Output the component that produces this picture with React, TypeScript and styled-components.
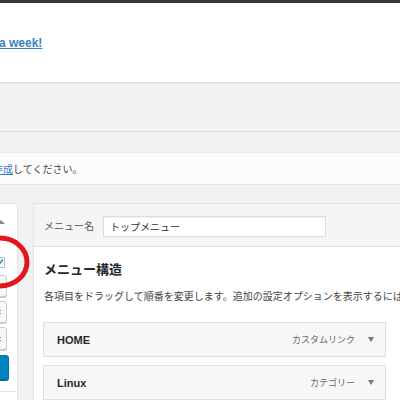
import React from "react";
import styled, { createGlobalStyle } from "styled-components";

const Global = createGlobalStyle`
  html, body { margin: 0; padding: 0; }
  body {
    width: 400px;
    height: 400px;
    overflow: hidden;
    background: #f1f1f1;
    font-family: "Liberation Sans", "Noto Sans CJK JP", sans-serif;
    color: #444;
  }
`;

const Page = styled.div`
  position: relative;
  width: 400px;
  height: 400px;
  overflow: hidden;
  display: flex;
  flex-direction: column;
  background: #f1f1f1;
`;

const TopBar = styled.div`
  flex: none;
  height: 3px;
  background: #32373c;
`;

const Header = styled.header`
  flex: none;
  box-sizing: border-box;
  height: 80px;
  padding-top: 32px;
  background: #fff;
  border-bottom: 1px solid #dedede;
  box-shadow: 0 1px 1px rgba(0, 0, 0, 0.04);
`;

const WeekLink = styled.a`
  display: block;
  margin-left: -1px;
  font-size: 12px;
  line-height: 16px;
  font-weight: bold;
  color: #3a80c3;
  text-decoration: underline;
`;

const Rule = styled.div`
  flex: none;
  height: 1px;
  margin-top: 48px;
  background: #dcdcdc;
`;

const Notice = styled.div`
  flex: none;
  box-sizing: border-box;
  height: 32px;
  margin-top: 20px;
  display: flex;
  align-items: center;
  background: #fcfcfc;
  border-top: 1px solid #ececec;
  box-shadow: 0 1px 1px rgba(0, 0, 0, 0.05);
  font-size: 10px;
  color: #444;
  white-space: nowrap;
`;

const NoticeText = styled.span`
  margin-left: -7px;
`;

const NoticeLink = styled.a`
  color: #3a80c3;
  text-decoration: underline;
`;

const Columns = styled.div`
  flex: 1;
  display: flex;
  gap: 15px;
  margin-top: 19px;
  align-items: stretch;
`;

const LeftCol = styled.aside`
  flex: none;
  box-sizing: border-box;
  width: 18px;
  display: flex;
  flex-direction: column;
  background: #fff;
  border-top: 1px solid #e5e5e5;
  border-right: 1px solid #e5e5e5;
`;

const ToggleArrow = styled.span`
  width: 0;
  height: 0;
  margin: 16px 0 0 -3px;
  border-left: 4px solid transparent;
  border-right: 4px solid transparent;
  border-bottom: 4px solid #8a8a8a;
`;

const CheckBox = styled.span`
  box-sizing: border-box;
  width: 11px;
  height: 11px;
  margin: 33px 0 0 -6px;
  display: flex;
  align-items: center;
  justify-content: center;
  background: #fff;
  border: 1px solid #b4b9be;
  border-radius: 1px;
`;

const SideButton = styled.span<{ $h: number; $primary?: boolean; $gap: number }>`
  box-sizing: border-box;
  width: ${(p) => (p.$primary ? 30 : 28)}px;
  height: ${(p) => p.$h}px;
  margin: ${(p) => p.$gap}px 0 0 -21px;
  display: flex;
  align-items: center;
  justify-content: flex-end;
  padding-right: 5px;
  border-radius: 3px;
  background: ${(p) => (p.$primary ? "#0085ba" : "#f7f7f7")};
  border: 1px solid ${(p) => (p.$primary ? "#0073aa" : "#cccccc")};
  box-shadow: ${(p) => (p.$primary ? "0 1px 0 #006799" : "0 1px 0 #ccc")};
`;

const SideDivider = styled.div`
  height: 1px;
  margin-top: 11px;
  background: #e5e5e5;
`;

const Panel = styled.section`
  flex: none;
  box-sizing: border-box;
  width: 420px;
  display: flex;
  flex-direction: column;
  background: #fff;
  border: 1px solid #e5e5e5;
  box-shadow: 0 1px 1px rgba(0, 0, 0, 0.04);
`;

const PanelHeader = styled.div`
  box-sizing: border-box;
  height: 43px;
  display: flex;
  align-items: center;
  padding-left: 10px;
  background: #f5f5f5;
  border-bottom: 1px solid #dfdfdf;
`;

const NameLabel = styled.label`
  font-size: 10px;
  color: #555;
  margin-right: 9px;
`;

const NameInput = styled.input`
  box-sizing: border-box;
  width: 223px;
  height: 21px;
  padding: 0 6px;
  margin: 2px 0 0;
  border: 1px solid #ddd;
  background: #fff;
  box-shadow: inset 0 1px 2px rgba(0, 0, 0, 0.07);
  font-family: "Liberation Sans", "Noto Sans CJK JP", sans-serif;
  font-size: 10px;
  color: #333;
  outline: none;
`;

const PanelBody = styled.div`
  padding: 14px 10px 0;
  display: flex;
  flex-direction: column;
`;

const Heading = styled.h3`
  margin: 0;
  font-size: 13px;
  line-height: 18px;
  font-weight: bold;
  color: #23282d;
`;

const Desc = styled.p`
  margin: 11px 0 0;
  font-size: 10px;
  line-height: 14px;
  white-space: nowrap;
  color: #444;
`;

const ItemList = styled.ul`
  list-style: none;
  margin: 18px 0 0 -1px;
  padding: 0;
  display: flex;
  flex-direction: column;
  gap: 8px;
`;

const Item = styled.li`
  box-sizing: border-box;
  width: 343px;
  height: 35px;
  display: flex;
  align-items: center;
  padding: 0 11px 0 13px;
  background: #f7f7f7;
  border: 1px solid #dfdfdf;
`;

const ItemTitle = styled.span`
  font-size: 11px;
  font-weight: bold;
  color: #23282d;
`;

const ItemType = styled.span`
  margin-left: auto;
  font-size: 9px;
  color: #666;
`;

const ItemArrow = styled.span`
  width: 0;
  height: 0;
  margin-left: 13px;
  border-left: 3.5px solid transparent;
  border-right: 3.5px solid transparent;
  border-top: 5px solid #777;
`;

const Annotation = styled.svg`
  position: absolute;
  left: -40px;
  top: 225px;
  width: 80px;
  height: 80px;
  pointer-events: none;
`;

const SortGlyph = () => (
  <svg width="4" height="8" viewBox="0 0 4 8">
    <path d="M0 3 L2 0.5 L4 3 Z" fill="#444" />
    <path d="M0 5 L2 7.5 L4 5 Z" fill="#444" />
  </svg>
);

export default function App() {
  return (
    <>
      <Global />
      <Page>
        <TopBar />
        <Header>
          <WeekLink href="#">a week!</WeekLink>
        </Header>
        <Rule />
        <Notice>
          <NoticeText>
            <NoticeLink href="#">作成</NoticeLink>してください。
          </NoticeText>
        </Notice>
        <Columns>
          <LeftCol>
            <ToggleArrow />
            <CheckBox>
              <svg width="9" height="9" viewBox="0 0 9 9">
                <path d="M1.5 4.8 L3.6 7 L7.8 1.6" fill="none" stroke="#1e8cbe" strokeWidth="1.6" />
              </svg>
            </CheckBox>
            <SideButton $h={22} $gap={7}>
              <SortGlyph />
            </SideButton>
            <SideButton $h={22} $gap={4}>
              <SortGlyph />
            </SideButton>
            <SideButton $h={23} $gap={4}>
              <SortGlyph />
            </SideButton>
            <SideButton $h={25} $gap={5} $primary />
            <SideDivider />
          </LeftCol>
          <Panel>
            <PanelHeader>
              <NameLabel>メニュー名</NameLabel>
              <NameInput readOnly defaultValue="トップメニュー" />
            </PanelHeader>
            <PanelBody>
              <Heading>メニュー構造</Heading>
              <Desc>各項目をドラッグして順番を変更します。追加の設定オプションを表示するには</Desc>
              <ItemList>
                <Item>
                  <ItemTitle>HOME</ItemTitle>
                  <ItemType>カスタムリンク</ItemType>
                  <ItemArrow />
                </Item>
                <Item>
                  <ItemTitle>Linux</ItemTitle>
                  <ItemType>カテゴリー</ItemType>
                  <ItemArrow />
                </Item>
              </ItemList>
            </PanelBody>
          </Panel>
        </Columns>
        <Annotation viewBox="0 0 80 80">
          <ellipse cx="40" cy="37" rx="27" ry="24" fill="none" stroke="#e3161c" strokeWidth="5" />
        </Annotation>
      </Page>
    </>
  );
}
